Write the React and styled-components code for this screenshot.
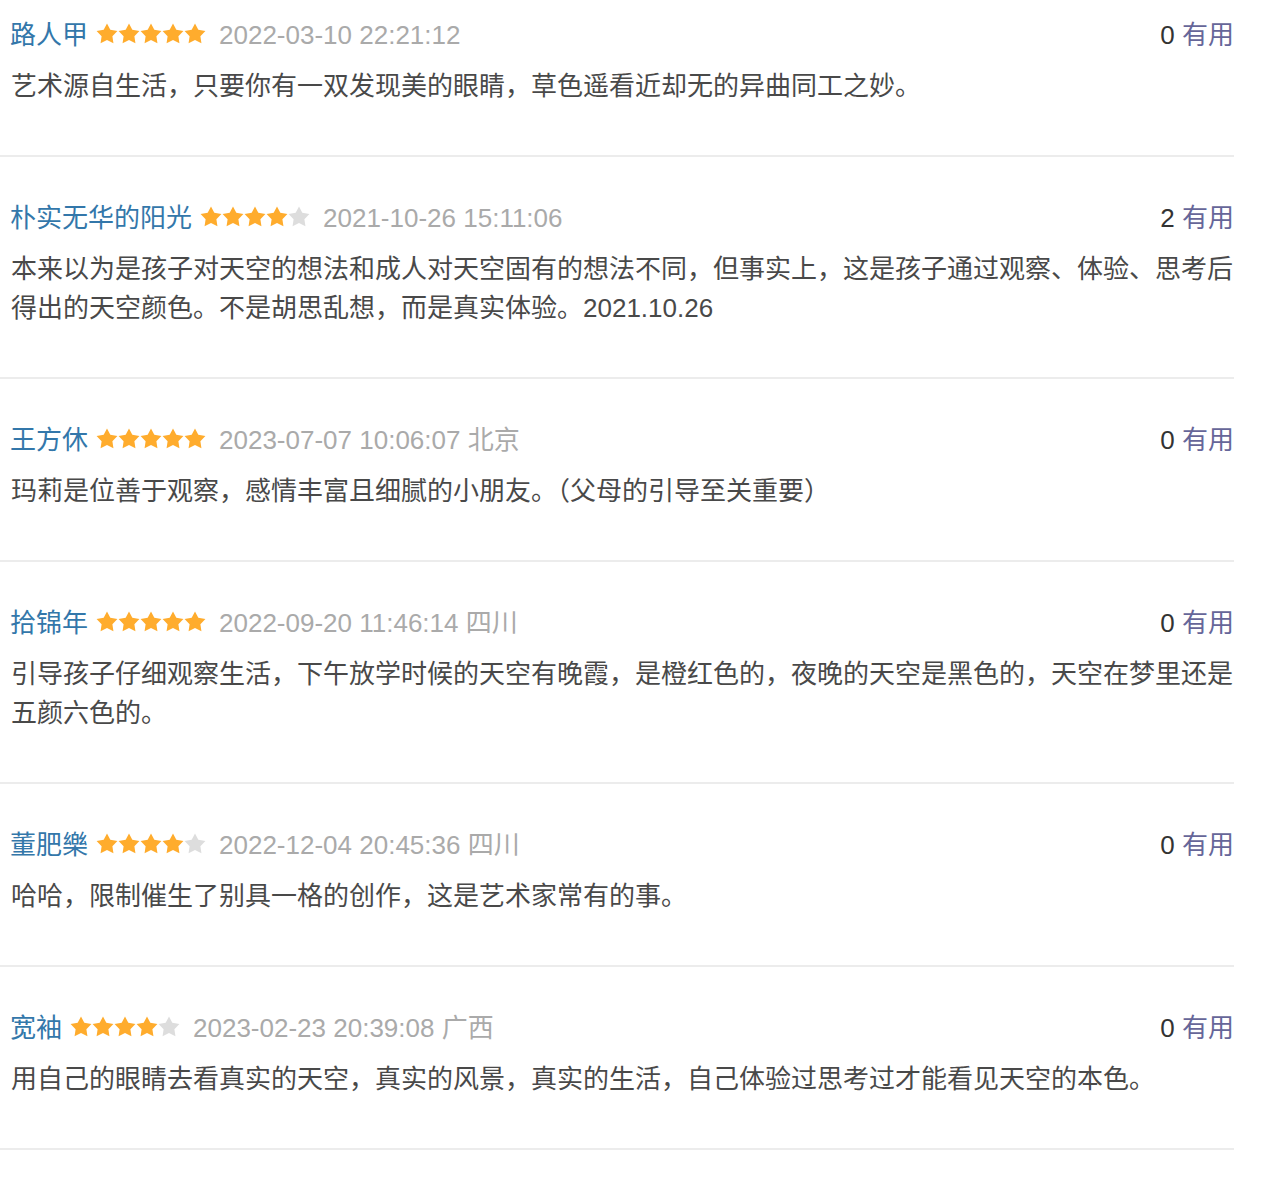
import React from 'react';
import styled, { createGlobalStyle } from 'styled-components';

const GlobalStyle = createGlobalStyle`
  html, body {
    margin: 0;
    padding: 0;
    background: #ffffff;
  }
  body {
    font-family: "Liberation Sans", "Noto Sans CJK SC", sans-serif;
  }
`;

const List = styled.div`
  width: 1234px;
`;

const Item = styled.div`
  padding: 41px 0 49px 11px;
  border-bottom: 2px solid #ececec;

  &:first-child {
    padding-top: 15px;
  }
`;

const Header = styled.div`
  display: flex;
  justify-content: space-between;
  align-items: center;
  height: 40px;
  font-size: 26px;
  line-height: 40px;
`;

const Info = styled.div`
  display: flex;
  align-items: center;
  white-space: nowrap;
`;

const Name = styled.span`
  color: #3377aa;
  margin-left: -1px;
`;

const Stars = styled.span`
  display: inline-flex;
  align-items: center;
  margin: 0 13px 4px 8px;
`;

const Meta = styled.span`
  color: #aaaaaa;
`;

const Votes = styled.div`
  color: #333333;
  white-space: nowrap;
`;

const Useful = styled.span`
  color: #666699;
`;

const Body = styled.p`
  margin: 12px 0 0;
  font-size: 26px;
  line-height: 39px;
  color: #494949;
`;

// étoile pleine : orange si active, gris clair sinon
const Star = ({ on }) => (
  <svg width="22" height="21" viewBox="0 0 24 23">
    <polygon
      points="12,0.5 15.64,7.48 23.41,8.79 17.9,14.42 19.05,22.21 12,18.7 4.95,22.21 6.1,14.42 0.59,8.79 8.36,7.48"
      fill={on ? '#ffac2d' : '#dddddd'}
    />
  </svg>
);

const comments = [
  {
    id: 1,
    name: '路人甲',
    rating: 5,
    meta: '2022-03-10 22:21:12',
    votes: 0,
    text: '艺术源自生活，只要你有一双发现美的眼睛，草色遥看近却无的异曲同工之妙。',
  },
  {
    id: 2,
    name: '朴实无华的阳光',
    rating: 4,
    meta: '2021-10-26 15:11:06',
    votes: 2,
    text: '本来以为是孩子对天空的想法和成人对天空固有的想法不同，但事实上，这是孩子通过观察、体验、思考后得出的天空颜色。不是胡思乱想，而是真实体验。2021.10.26',
  },
  {
    id: 3,
    name: '王方休',
    rating: 5,
    meta: '2023-07-07 10:06:07 北京',
    votes: 0,
    text: '玛莉是位善于观察，感情丰富且细腻的小朋友。（父母的引导至关重要）',
  },
  {
    id: 4,
    name: '拾锦年',
    rating: 5,
    meta: '2022-09-20 11:46:14 四川',
    votes: 0,
    text: '引导孩子仔细观察生活，下午放学时候的天空有晚霞，是橙红色的，夜晚的天空是黑色的，天空在梦里还是五颜六色的。',
  },
  {
    id: 5,
    name: '董肥樂',
    rating: 4,
    meta: '2022-12-04 20:45:36 四川',
    votes: 0,
    text: '哈哈，限制催生了别具一格的创作，这是艺术家常有的事。',
  },
  {
    id: 6,
    name: '宽袖',
    rating: 4,
    meta: '2023-02-23 20:39:08 广西',
    votes: 0,
    text: '用自己的眼睛去看真实的天空，真实的风景，真实的生活，自己体验过思考过才能看见天空的本色。',
  },
];

const App = () => (
  <>
    <GlobalStyle />
    <List>
      {comments.map((c) => (
        <Item key={c.id}>
          <Header>
            <Info>
              <Name>{c.name}</Name>
              <Stars>
                {[1, 2, 3, 4, 5].map((n) => (
                  <Star key={n} on={n <= c.rating} />
                ))}
              </Stars>
              <Meta>{c.meta}</Meta>
            </Info>
            <Votes>
              {c.votes} <Useful>有用</Useful>
            </Votes>
          </Header>
          <Body>{c.text}</Body>
        </Item>
      ))}
    </List>
  </>
);

export default App;
